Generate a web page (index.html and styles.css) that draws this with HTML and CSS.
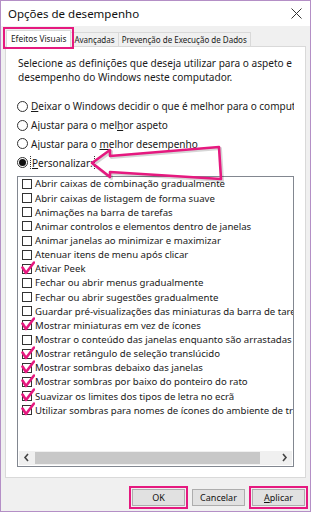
FILE: index.html
```html
<!DOCTYPE html>
<html lang="pt">
<head>
<meta charset="utf-8">
<title>Opções de desempenho</title>
<link rel="stylesheet" href="styles.css">
</head>
<body>
<div class="window">
  <div class="titlebar">
    <span class="title">Opções de desempenho</span>
    <svg class="close" width="11" height="11" viewBox="0 0 11 11"><path d="M0.5 0.5 L10.5 10.5 M10.5 0.5 L0.5 10.5" stroke="#333" stroke-width="1" fill="none"/></svg>
  </div>
  <div class="body">
    <div class="tabs">
      <div class="tab active">Efeitos Visuais</div>
      <div class="tab">Avançadas</div>
      <div class="tab">Prevenção de Execução de Dados</div>
    </div>
    <div class="panel">
      <p class="intro">Selecione as definições que deseja utilizar para o aspeto e desempenho do Windows neste computador.</p>
      <div class="radios">
        <div class="radio"><span class="dot"></span><span class="rlabel"><u>D</u>eixar o Windows decidir o que é melhor para o computador</span></div>
        <div class="radio"><span class="dot"></span><span class="rlabel">Ajustar para o mel<u>h</u>or aspeto</span></div>
        <div class="radio"><span class="dot"></span><span class="rlabel">Ajustar para o <u>m</u>elhor desempenho</span></div>
        <div class="radio"><span class="dot on"></span><span class="rlabel focus"><u>P</u>ersonalizar:</span></div>
      </div>
      <div class="listbox">
        <div class="items">
          <div class="item"><span class="box"></span>Abrir caixas de combinação gradualmente</div>
          <div class="item"><span class="box"></span>Abrir caixas de listagem de forma suave</div>
          <div class="item"><span class="box"></span>Animações na barra de tarefas</div>
          <div class="item"><span class="box"></span>Animar controlos e elementos dentro de janelas</div>
          <div class="item"><span class="box"></span>Animar janelas ao minimizar e maximizar</div>
          <div class="item"><span class="box"></span>Atenuar itens de menu após clicar</div>
          <div class="item"><span class="box"><svg class="check" width="14" height="14" viewBox="0 0 14 14"><path d="M1.5 6.5 L5 12 L13 1.5" stroke="#e5197f" stroke-width="2.6" fill="none" stroke-linejoin="round" stroke-linecap="round"/></svg></span>Ativar Peek</div>
          <div class="item"><span class="box"></span>Fechar ou abrir menus gradualmente</div>
          <div class="item"><span class="box"></span>Fechar ou abrir sugestões gradualmente</div>
          <div class="item"><span class="box"></span>Guardar pré-visualizações das miniaturas da barra de tarefas</div>
          <div class="item"><span class="box"><svg class="check" width="14" height="14" viewBox="0 0 14 14"><path d="M1.5 6.5 L5 12 L13 1.5" stroke="#e5197f" stroke-width="2.6" fill="none" stroke-linejoin="round" stroke-linecap="round"/></svg></span>Mostrar miniaturas em vez de ícones</div>
          <div class="item"><span class="box"></span>Mostrar o conteúdo das janelas enquanto são arrastadas</div>
          <div class="item"><span class="box"><svg class="check" width="14" height="14" viewBox="0 0 14 14"><path d="M1.5 6.5 L5 12 L13 1.5" stroke="#e5197f" stroke-width="2.6" fill="none" stroke-linejoin="round" stroke-linecap="round"/></svg></span>Mostrar retângulo de seleção translúcido</div>
          <div class="item"><span class="box"><svg class="check" width="14" height="14" viewBox="0 0 14 14"><path d="M1.5 6.5 L5 12 L13 1.5" stroke="#e5197f" stroke-width="2.6" fill="none" stroke-linejoin="round" stroke-linecap="round"/></svg></span>Mostrar sombras debaixo das janelas</div>
          <div class="item"><span class="box"><svg class="check" width="14" height="14" viewBox="0 0 14 14"><path d="M1.5 6.5 L5 12 L13 1.5" stroke="#e5197f" stroke-width="2.6" fill="none" stroke-linejoin="round" stroke-linecap="round"/></svg></span>Mostrar sombras por baixo do ponteiro do rato</div>
          <div class="item"><span class="box"><svg class="check" width="14" height="14" viewBox="0 0 14 14"><path d="M1.5 6.5 L5 12 L13 1.5" stroke="#e5197f" stroke-width="2.6" fill="none" stroke-linejoin="round" stroke-linecap="round"/></svg></span>Suavizar os limites dos tipos de letra no ecrã</div>
          <div class="item"><span class="box"><svg class="check" width="14" height="14" viewBox="0 0 14 14"><path d="M1.5 6.5 L5 12 L13 1.5" stroke="#e5197f" stroke-width="2.6" fill="none" stroke-linejoin="round" stroke-linecap="round"/></svg></span>Utilizar sombras para nomes de ícones do ambiente de trabalho</div>
        </div>
        <div class="hscroll">
          <svg class="arr" width="7" height="9" viewBox="0 0 7 9"><path d="M5 1 L2 4.5 L5 8" stroke="#444" stroke-width="1.6" fill="none"/></svg>
          <div class="track"><div class="thumb"></div></div>
          <svg class="arr" width="7" height="9" viewBox="0 0 7 9"><path d="M2 1 L5 4.5 L2 8" stroke="#444" stroke-width="1.6" fill="none"/></svg>
        </div>
      </div>
    </div>
    <div class="buttons">
      <button class="btn hl">OK</button>
      <button class="btn">Cancelar</button>
      <button class="btn hl"><u>A</u>plicar</button>
    </div>
  </div>
  <div class="hl-tab"></div>
  <svg class="arrow" width="140" height="50" viewBox="0 0 140 50">
    <polygon points="4,29 22,16 22,22 131,13 133,45 22,38 22,43" fill="none" stroke="rgba(0,0,0,0.16)" stroke-width="3" stroke-linejoin="round" transform="translate(1.5,1.5)"/>
    <polygon points="4,29 22,16 22,22 131,13 133,45 22,38 22,43" fill="none" stroke="#e5197f" stroke-width="2.6" stroke-linejoin="round"/>
  </svg>
</div>
</body>
</html>
```

FILE: styles.css
```css
* { box-sizing: border-box; }
html, body { margin: 0; padding: 0; }
body {
  width: 311px;
  height: 512px;
  overflow: hidden;
  font-family: "Noto Sans", "Open Sans", sans-serif;
  font-size: 10px;
  color: #1a1a1a;
  background: #fff;
}
.window {
  position: relative;
  width: 311px;
  height: 512px;
  border: 1px solid #b48fc6;
  background: #f0f0f0;
  display: flex;
  flex-direction: column;
}
.titlebar {
  height: 25px;
  flex: none;
  background: #fff;
  display: flex;
  align-items: center;
  justify-content: space-between;
  padding: 0 7px 0 7px;
}
.title { font-size: 11.5px; color: #111; }
.close { margin-right: 1px; }
.body {
  flex: 1;
  display: flex;
  flex-direction: column;
  padding: 3px 4px 0 4px;
}
.tabs {
  display: flex;
  align-items: flex-end;
  height: 17px;
  margin-left: 1px;
}
.tab {
  height: 14px;
  line-height: 13px;
  padding: 0 3px;
  border: 1px solid #d9d9d9;
  border-bottom: none;
  background: #f0f0f0;
  font-size: 8px;
  white-space: nowrap;
  margin-left: -1px;
}
.tab.active {
  height: 17px;
  line-height: 16px;
  background: #fff;
  padding: 0 4px;
  position: relative;
  z-index: 1;
  margin-left: 0;
  margin-bottom: -1px;
  font-size: 8.3px;
}
.panel {
  background: #fff;
  border: 1px solid #d9d9d9;
  height: 432px;
  padding: 9px 11px 0 11px;
  display: flex;
  flex-direction: column;
}
.intro {
  margin: 0 0 0 1px;
  line-height: 14px;
  font-size: 10.1px;
  width: 285px;
}
.radios {
  margin-top: 16px;
  display: flex;
  flex-direction: column;
  gap: 6.3px;
}
.radio {
  display: flex;
  align-items: center;
  height: 12.5px;
  font-size: 10px;
  white-space: nowrap;
  overflow: hidden;
}
.dot {
  width: 11px;
  height: 11px;
  border: 1px solid #333;
  border-radius: 50%;
  margin-right: 3px;
  flex: none;
  background: #fff;
  display: flex;
  align-items: center;
  justify-content: center;
}
.dot.on::after {
  content: "";
  width: 7px;
  height: 7px;
  border-radius: 50%;
  background: #111;
}
.rlabel.focus {
  outline: 1px dotted #333;
  outline-offset: 0;
  padding: 0 1px;
}
.listbox {
  margin-top: 7px;
  border: 1px solid #828790;
  height: 291px;
  display: flex;
  flex-direction: column;
  overflow: hidden;
}
.items {
  flex: 1;
  padding-top: 0;
  overflow: hidden;
}
.item {
  display: flex;
  align-items: center;
  height: 14.15px;
  padding-left: 4px;
  white-space: nowrap;
  font-size: 9.6px;
}
.box {
  position: relative;
  width: 10px;
  height: 10px;
  border: 1px solid #333;
  background: #fff;
  flex: none;
  margin-right: 3px;
}
.check {
  position: absolute;
  left: -2px;
  top: -4px;
}
.hscroll {
  height: 14px;
  flex: none;
  display: flex;
  align-items: center;
  background: #f0f0f0;
  padding: 0 4px;
  margin: 0 1px 1px 1px;
}
.arr { flex: none; }
.track {
  flex: 1;
  height: 100%;
  padding: 1px 21px 1px 5px;
}
.thumb {
  height: 100%;
  background: #c8c8c8;
}
.buttons {
  display: flex;
  justify-content: flex-end;
  gap: 7px;
  padding-top: 11px;
  padding-right: 1px;
}
.btn {
  width: 53px;
  height: 17px;
  border: 1px solid #adadad;
  background: #e1e1e1;
  font-family: "Noto Sans", "Open Sans", sans-serif;
  font-size: 9px;
  color: #111;
  padding: 0;
  line-height: 15px;
}
.btn.hl {
  outline: 2px solid #e5197f;
  outline-offset: 1px;
}
.hl-tab {
  position: absolute;
  left: 2px;
  top: 26px;
  width: 71px;
  height: 22px;
  border: 2px solid #e5197f;
  z-index: 2;
}
.arrow {
  position: absolute;
  left: 87px;
  top: 133px;
  z-index: 3;
}
```
